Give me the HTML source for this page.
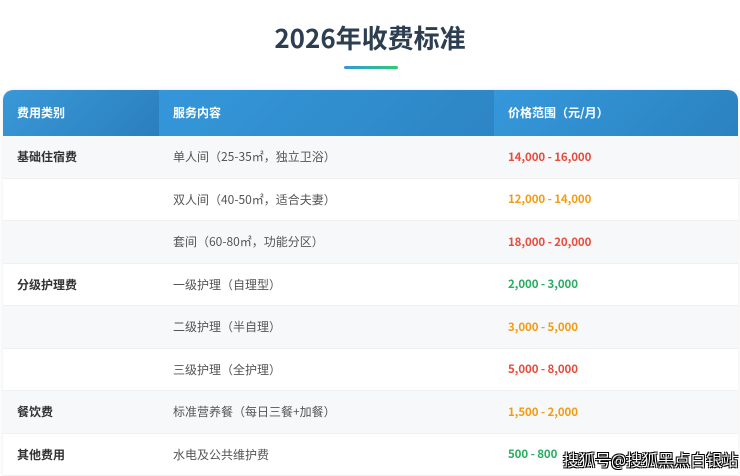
<!DOCTYPE html><html><head><meta charset="utf-8"><style>
body{margin:0;width:740px;height:474px;background:#fff;font-family:"Noto Sans CJK SC",sans-serif;overflow:hidden;position:relative}
h1{margin:0;position:absolute;top:19px;left:0;width:740px;text-align:center;font-size:26px;color:#2c3e50;font-weight:bold;line-height:38px}
.bar{position:absolute;left:344px;top:66px;width:54px;height:3px;border-radius:2px;background:linear-gradient(90deg,#3498db,#2ecc71)}
.tbl{position:absolute;left:3px;top:90px;width:735px;border-radius:10px 10px 0 0;overflow:hidden;box-shadow:0 0 6px rgba(0,0,0,.08)}
.row{display:flex;height:42.5px;align-items:center;border-bottom:1px solid #eef0f2;box-sizing:border-box;font-size:12px;color:#555}
.row div{padding-left:14px;box-sizing:border-box}
.c1{width:156px}.c2{width:335px}.c3{flex:1}
.hd{height:46px;color:#fff;font-weight:bold;border:0}
.hd div{height:46px;line-height:46px}
.hd .c1{background:linear-gradient(135deg,#3a98d8,#2a7fbc)}
.hd .c2{background:linear-gradient(135deg,#3497da,#2d85c4)}
.hd .c3{background:linear-gradient(135deg,#3598db,#2b82bf)}
.g{background:#f7f8fa}
.cat{font-weight:bold;color:#333}
.r,.o,.gr{font-weight:bold;font-size:11.5px;letter-spacing:-0.1px}
.r{color:#e74c3c}.o{color:#f39c12}.gr{color:#27ae60}
.wm{position:absolute;left:563px;top:447px;font-size:16px;color:#fff;text-shadow:-1px -1px 0 #000,1px -1px 0 #000,-1px 1px 0 #000,1px 1px 0 #000}
</style></head><body>
<h1>2026年收费标准</h1><div class="bar"></div>
<div class="tbl">
<div class="row hd"><div class="c1">费用类别</div><div class="c2">服务内容</div><div class="c3">价格范围（元/月）</div></div>
<div class="row g"><div class="c1 cat">基础住宿费</div><div class="c2">单人间（25-35㎡，独立卫浴）</div><div class="c3 r">14,000 - 16,000</div></div>
<div class="row"><div class="c1"></div><div class="c2">双人间（40-50㎡，适合夫妻）</div><div class="c3 o">12,000 - 14,000</div></div>
<div class="row g"><div class="c1"></div><div class="c2">套间（60-80㎡，功能分区）</div><div class="c3 r">18,000 - 20,000</div></div>
<div class="row"><div class="c1 cat">分级护理费</div><div class="c2">一级护理（自理型）</div><div class="c3 gr">2,000 - 3,000</div></div>
<div class="row g"><div class="c1"></div><div class="c2">二级护理（半自理）</div><div class="c3 o">3,000 - 5,000</div></div>
<div class="row"><div class="c1"></div><div class="c2">三级护理（全护理）</div><div class="c3 r">5,000 - 8,000</div></div>
<div class="row g"><div class="c1 cat">餐饮费</div><div class="c2">标准营养餐（每日三餐+加餐）</div><div class="c3 o">1,500 - 2,000</div></div>
<div class="row"><div class="c1 cat">其他费用</div><div class="c2">水电及公共维护费</div><div class="c3 gr">500 - 800</div></div>
</div>
<div class="wm">搜狐号@搜狐黑点白银站</div>
</body></html>
